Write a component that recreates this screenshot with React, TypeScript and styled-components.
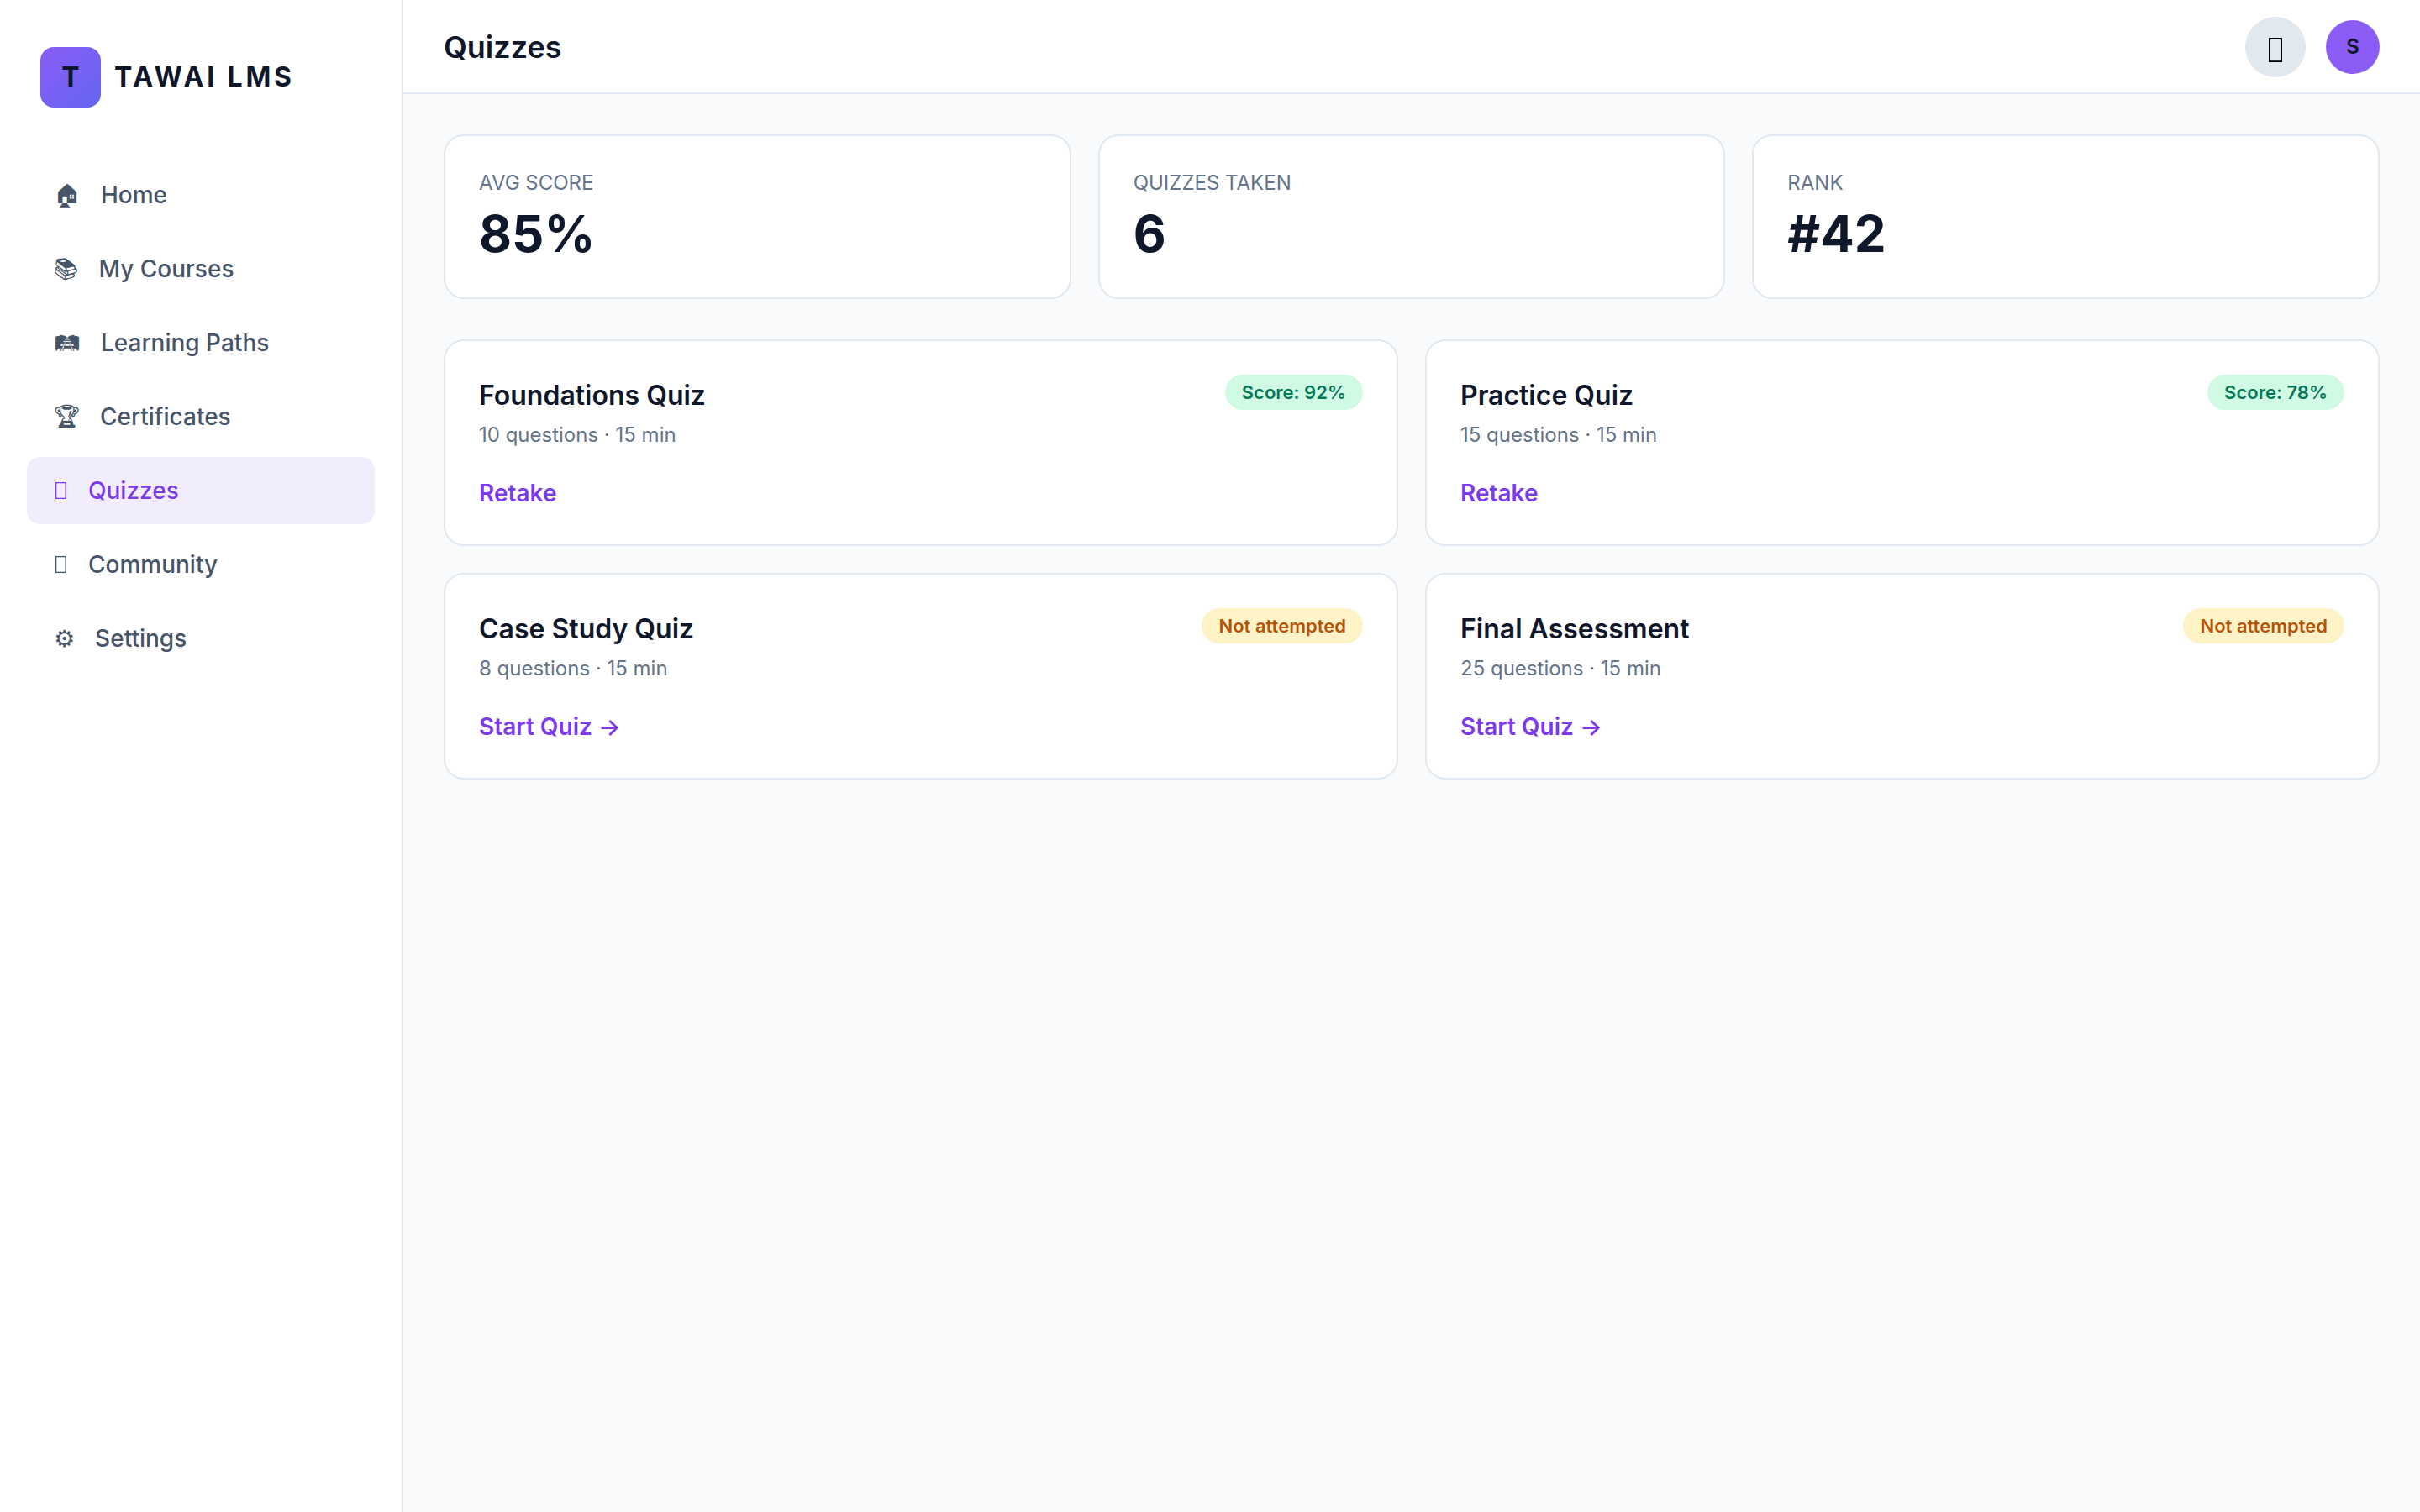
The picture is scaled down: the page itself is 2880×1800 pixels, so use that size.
import React from "react";
import styled, { createGlobalStyle } from "styled-components";

const GlobalStyle = createGlobalStyle`
  *, *::before, *::after { box-sizing: border-box; }
  body {
    margin: 0;
    background: #f8fafc;
    color: #0f172a;
    font-family: Inter, sans-serif;
    font-size: 28px;
    line-height: 1.5;
  }
  h1, h2, p, dl, dt, dd, ul { margin: 0; padding: 0; }
`;

const Shell = styled.div`
  display: grid;
  grid-template-columns: 480px minmax(0, 1fr);
  min-height: 100vh;
`;

const Sidebar = styled.aside`
  background: #ffffff;
  border-right: 2px solid #e2e8f0;
  padding: 56px 32px;
  display: flex;
  flex-direction: column;
  gap: 64px;
`;

const Brand = styled.div`
  display: flex;
  align-items: center;
  gap: 16px;
  padding: 0 16px;
  font-size: 32px;
  font-weight: 700;
`;

const BrandMark = styled.span`
  display: grid;
  place-items: center;
  width: 72px;
  height: 72px;
  border-radius: 16px;
  background: linear-gradient(135deg, #8b5cf6, #6366f1);
`;

const BrandName = styled.span`
  letter-spacing: 0.12em;
  line-height: 50px;
`;

const NavList = styled.ul`
  list-style: none;
  display: flex;
  flex-direction: column;
  gap: 8px;
`;

const NavLink = styled.a<{ $active?: boolean }>`
  display: flex;
  align-items: center;
  gap: 24px;
  min-height: 80px;
  padding: 0 32px;
  border-radius: 16px;
  font-weight: 500;
  text-decoration: none;
  color: ${(p) => (p.$active ? "#7c3aed" : "#475569")};
  background: ${(p) => (p.$active ? "#f2edfd" : "transparent")};
`;

const NavIcon = styled.span`
  display: flex;
  align-items: center;
  height: 42px;
  font-family: Inter, "Noto Sans Symbols2", "Noto Sans Symbols 2", Symbola, "DejaVu Sans", sans-serif;
  font-variant-emoji: text;
  line-height: 42px;
`;

const Content = styled.div`
  display: flex;
  flex-direction: column;
`;

const TopBar = styled.header`
  display: flex;
  align-items: center;
  justify-content: space-between;
  padding: 20px 48px 18px;
  background: #ffffff;
  border-bottom: 2px solid #e2e8f0;
`;

const PageTitle = styled.h1`
  font-size: 36px;
  line-height: 52px;
  font-weight: 600;
`;

const Actions = styled.div`
  display: flex;
  align-items: center;
  gap: 24px;
`;

const BellButton = styled.button`
  display: grid;
  place-items: center;
  width: 72px;
  height: 72px;
  padding: 0;
  border: 0;
  border-radius: 50%;
  background: #e2e8f0;
  color: #000000;
`;

const Avatar = styled.span`
  display: grid;
  place-items: center;
  width: 64px;
  height: 64px;
  border-radius: 50%;
  background: #8b5cf6;
  font-size: 24px;
  font-weight: 600;
`;

const Main = styled.main`
  display: flex;
  flex-direction: column;
  gap: 48px;
  padding: 48px;
`;

const StatGrid = styled.dl`
  display: grid;
  grid-template-columns: repeat(3, minmax(0, 1fr));
  gap: 32px;
`;

const QuizGrid = styled.section`
  display: grid;
  grid-template-columns: repeat(2, minmax(0, 1fr));
  gap: 32px;
`;

const Card = styled.div`
  background: #ffffff;
  border: 2px solid #e2e8f0;
  border-radius: 24px;
  padding: 40px;
`;

const StatLabel = styled.dt`
  font-size: 24px;
  line-height: 32px;
  margin-bottom: 8px;
  color: #64748b;
  text-transform: uppercase;
`;

const StatValue = styled.dd`
  font-size: 60px;
  line-height: 72px;
  font-weight: 700;
`;

const QuizHead = styled.div`
  display: flex;
  align-items: flex-start;
  justify-content: space-between;
  margin-bottom: 30px;
`;

const QuizTitle = styled.h2`
  font-size: 32px;
  line-height: 50px;
  font-weight: 600;
`;

const QuizMeta = styled.p`
  margin-top: 4px;
  font-size: 24px;
  color: #64748b;
`;

const Badge = styled.span<{ $done: boolean }>`
  padding: 8px 20px;
  border-radius: 999px;
  font-size: 22px;
  line-height: 26px;
  font-weight: 600;
  color: ${(p) => (p.$done ? "#047857" : "#b45309")};
  background: ${(p) => (p.$done ? "#d1fae5" : "#fef3c7")};
`;

const QuizLink = styled.a`
  display: block;
  font-weight: 600;
  color: #7c3aed;
  text-decoration: none;
`;

const SmallFrame = () => (
  <svg width="17" height="28" viewBox="0 0 17 28" fill="none" stroke="currentColor" strokeWidth="1.3" aria-hidden="true">
    <rect x="2.65" y="4.65" width="11.5" height="18.7" />
  </svg>
);

const LargeFrame = () => (
  <svg width="24" height="40" viewBox="0 0 24 40" fill="none" stroke="currentColor" strokeWidth="1.8" aria-hidden="true">
    <rect x="4.9" y="9.9" width="14.2" height="27.2" />
  </svg>
);

const navItems = [
  { icon: "🏠", label: "Home" },
  { icon: "📚", label: "My Courses" },
  { icon: "🛤", label: "Learning Paths" },
  { icon: "🏆", label: "Certificates" },
  { icon: <SmallFrame />, label: "Quizzes", active: true },
  { icon: <SmallFrame />, label: "Community" },
  { icon: "⚙", label: "Settings" },
];

const stats = [
  { label: "Avg Score", value: "85%" },
  { label: "Quizzes Taken", value: "6" },
  { label: "Rank", value: "#42" },
];

const quizzes = [
  { title: "Foundations Quiz", questions: 10, score: 92 },
  { title: "Practice Quiz", questions: 15, score: 78 },
  { title: "Case Study Quiz", questions: 8, score: null },
  { title: "Final Assessment", questions: 25, score: null },
];

export default function App() {
  return (
    <>
      <GlobalStyle />
      <Shell>
        <Sidebar>
          <Brand>
            <BrandMark>T</BrandMark>
            <BrandName>TAWAI LMS</BrandName>
          </Brand>
          <nav>
            <NavList>
              {navItems.map((item) => (
                <li key={item.label}>
                  <NavLink href="#" $active={item.active} aria-current={item.active ? "page" : undefined}>
                    <NavIcon aria-hidden="true">{item.icon}</NavIcon>
                    <span>{item.label}</span>
                  </NavLink>
                </li>
              ))}
            </NavList>
          </nav>
        </Sidebar>
        <Content>
          <TopBar>
            <PageTitle>Quizzes</PageTitle>
            <Actions>
              <BellButton type="button" aria-label="Notifications">
                <LargeFrame />
              </BellButton>
              <Avatar>S</Avatar>
            </Actions>
          </TopBar>
          <Main>
            <StatGrid>
              {stats.map((stat) => (
                <Card key={stat.label}>
                  <StatLabel>{stat.label}</StatLabel>
                  <StatValue>{stat.value}</StatValue>
                </Card>
              ))}
            </StatGrid>
            <QuizGrid>
              {quizzes.map((quiz) => (
                <Card key={quiz.title}>
                  <QuizHead>
                    <div>
                      <QuizTitle>{quiz.title}</QuizTitle>
                      <QuizMeta>{`${quiz.questions} questions · 15 min`}</QuizMeta>
                    </div>
                    <Badge $done={quiz.score !== null}>
                      {quiz.score !== null ? `Score: ${quiz.score}%` : "Not attempted"}
                    </Badge>
                  </QuizHead>
                  <QuizLink href="#">{quiz.score !== null ? "Retake" : "Start Quiz →"}</QuizLink>
                </Card>
              ))}
            </QuizGrid>
          </Main>
        </Content>
      </Shell>
    </>
  );
}
